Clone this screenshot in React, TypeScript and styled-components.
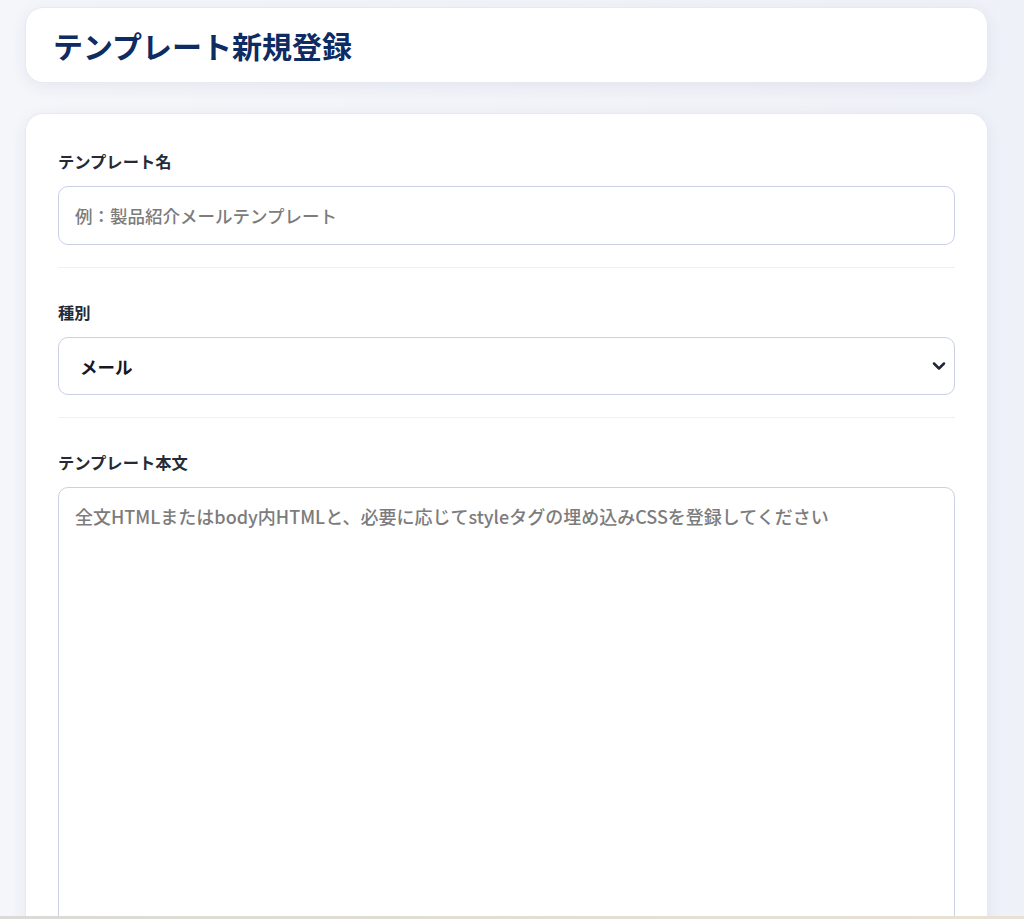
import { createGlobalStyle } from "styled-components";
import styled from "styled-components";
import { ChevronDown } from "lucide-react";

const GlobalStyle = createGlobalStyle`
  html, body {
    margin: 0;
    padding: 0;
  }
  body {
    background: linear-gradient(90deg, #f5f6fa 0%, #eff1f8 100%);
    font-family: "Noto Sans CJK JP", "Noto Sans", sans-serif;
    color: #1f2937;
  }
`;

const Page = styled.div`
  display: flex;
  flex-direction: column;
  gap: 30px;
  padding: 7px 36px 0 25px;
`;

const Card = styled.section`
  background: #fff;
  border-radius: 18px;
  border: 1px solid #e6e9f2;
  box-shadow: 0 4px 16px rgba(40, 60, 120, 0.07);
`;

const HeaderCard = styled(Card)`
  height: 76px;
  box-sizing: border-box;
  display: flex;
  align-items: center;
  padding: 0 27px;
`;

const Title = styled.h1`
  margin: 0;
  font-size: 30px;
  font-weight: 700;
  color: #0e2b63;
`;

const FormCard = styled(Card)`
  padding: 35px 32px 0;
  border-bottom: none;
  border-bottom-left-radius: 0;
  border-bottom-right-radius: 0;
`;

const Field = styled.div`
  display: flex;
  flex-direction: column;
  gap: 13px;
`;

const Divider = styled.hr`
  border: none;
  border-top: 1px solid #eef0f5;
  margin: 22px 0 32px;
`;

const Label = styled.label`
  font-size: 16.3px;
  font-weight: 700;
  line-height: 24px;
  color: #252b36;
`;

const inputBase = `
  box-sizing: border-box;
  width: 100%;
  border: 1px solid #c8d0e2;
  border-radius: 10px;
  background: #fff;
  font-family: "Noto Sans CJK JP", "Noto Sans", sans-serif;
  font-size: 17.5px;
  font-weight: 500;
  outline: none;
`;

const TextInput = styled.input`
  ${inputBase}
  height: 59px;
  padding: 0 16px;
  &::placeholder {
    color: #7c7c7c;
  }
`;

const SelectWrap = styled.div`
  position: relative;
`;

const Select = styled.select`
  ${inputBase}
  appearance: none;
  height: 58px;
  padding: 0 40px 0 21px;
  color: #16191f;
  font-weight: 700;
`;

const SelectIcon = styled.span`
  position: absolute;
  right: 6px;
  top: 50%;
  transform: translateY(-50%);
  display: flex;
  color: #1f2733;
  pointer-events: none;
`;

const TextArea = styled.textarea`
  ${inputBase}
  display: block;
  height: 440px;
  padding: 15px 16px;
  resize: none;
  font-size: 18px;
  line-height: 1.5;
  &::placeholder {
    color: #7c7c7c;
  }
`;

const BottomStrip = styled.div`
  position: fixed;
  left: 0;
  right: 0;
  bottom: 0;
  height: 3px;
  background: linear-gradient(90deg, #dcdad6 0%, #e8e2d4 100%);
`;

export default function App() {
  return (
    <>
      <GlobalStyle />
      <Page>
        <HeaderCard>
          <Title>テンプレート新規登録</Title>
        </HeaderCard>
        <FormCard>
          <Field>
            <Label htmlFor="tpl-name">テンプレート名</Label>
            <TextInput id="tpl-name" placeholder="例：製品紹介メールテンプレート" />
          </Field>
          <Divider />
          <Field>
            <Label htmlFor="tpl-type">種別</Label>
            <SelectWrap>
              <Select id="tpl-type" defaultValue="mail">
                <option value="mail">メール</option>
                <option value="line">LINE</option>
              </Select>
              <SelectIcon>
                <ChevronDown size={20} strokeWidth={3} />
              </SelectIcon>
            </SelectWrap>
          </Field>
          <Divider />
          <Field>
            <Label htmlFor="tpl-body">テンプレート本文</Label>
            <TextArea
              id="tpl-body"
              placeholder="全文HTMLまたはbody内HTMLと、必要に応じてstyleタグの埋め込みCSSを登録してください"
            />
          </Field>
        </FormCard>
      </Page>
      <BottomStrip />
    </>
  );
}
